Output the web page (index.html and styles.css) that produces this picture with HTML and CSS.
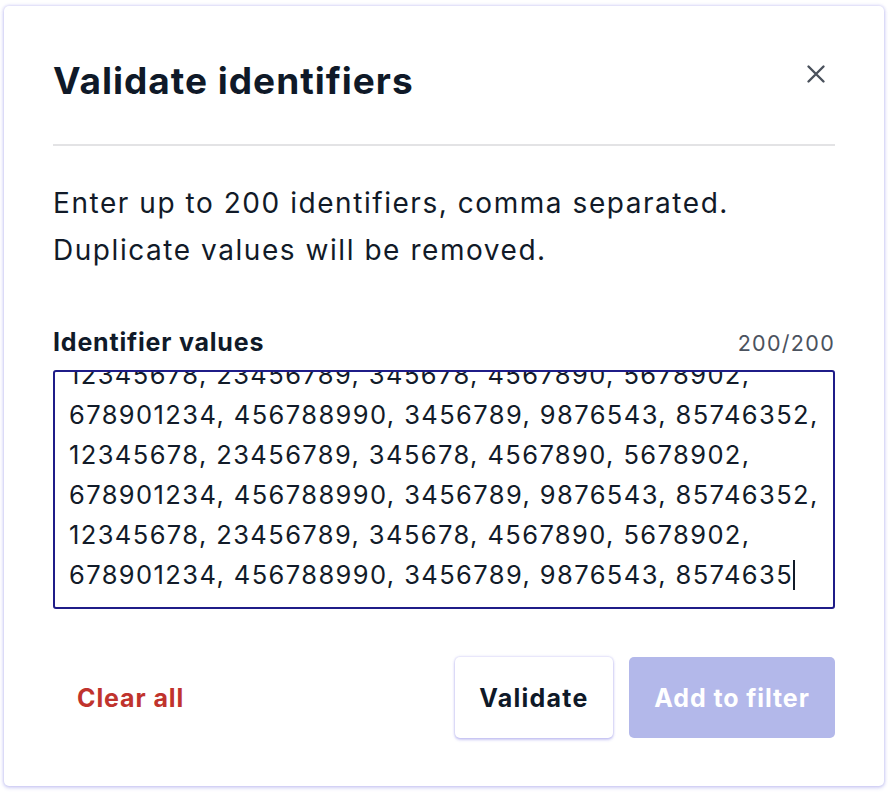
FILE: index.html
```html
<!DOCTYPE html>
<html lang="en">
<head>
<meta charset="utf-8">
<title>Validate identifiers</title>
<link rel="stylesheet" href="styles.css">
</head>
<body>
<div class="dialog">
  <header class="dialog-header">
    <h1 class="dialog-title">Validate identifiers</h1>
    <button class="close-btn" aria-label="Close">
      <svg width="20" height="20" viewBox="0 0 20 20" fill="none" stroke="#4a515c" stroke-width="2.4" stroke-linecap="round"><path d="M2.5 2.5 L17.5 17.5 M17.5 2.5 L2.5 17.5"/></svg>
    </button>
  </header>
  <p class="intro">Enter up to 200 identifiers, comma separated.<br>Duplicate values will be removed.</p>
  <div class="field-head">
    <span class="field-label">Identifier values</span>
    <span class="counter">200/200</span>
  </div>
  <div class="textarea">
    <div class="line">12345678, 23456789, 345678, 4567890, 5678902,</div>
    <div class="line">678901234, 456788990, 3456789, 9876543, 85746352,</div>
    <div class="line">12345678, 23456789, 345678, 4567890, 5678902,</div>
    <div class="line">678901234, 456788990, 3456789, 9876543, 85746352,</div>
    <div class="line">12345678, 23456789, 345678, 4567890, 5678902,</div>
    <div class="line">678901234, 456788990, 3456789, 9876543, 85746352,</div>
    <div class="line">12345678, 23456789, 345678, 4567890, 5678902,</div>
    <div class="line">678901234, 456788990, 3456789, 9876543, 8574635<span class="caret"></span></div>
  </div>
  <footer class="dialog-footer">
    <button class="btn-clear">Clear all</button>
    <div class="actions">
      <button class="btn btn-secondary">Validate</button>
      <button class="btn btn-primary" disabled>Add to filter</button>
    </div>
  </footer>
</div>
</body>
</html>
```

FILE: styles.css
```css
* { box-sizing: border-box; }
html, body { margin: 0; padding: 0; background: #ffffff; }
body {
  padding: 6px 4px;
  font-family: "Inter", "Noto Sans", "Liberation Sans", sans-serif;
  color: #101a29;
}
.dialog {
  width: 880px;
  height: 780px;
  background: #fff;
  border-radius: 5px;
  box-shadow: 0 0 3px 1px rgba(96, 90, 220, 0.22), 0 2px 4px rgba(96, 90, 220, 0.2);
  padding: 28px 49px 0 49px;
  display: flex;
  flex-direction: column;
}
.dialog-header {
  display: flex;
  justify-content: space-between;
  align-items: flex-start;
  padding: 21px 0 37px;
  border-bottom: 2px solid #e3e3e5;
}
.dialog-title {
  margin: 0;
  font-size: 37px;
  line-height: 52px;
  font-weight: 700;
  letter-spacing: 1px;
  color: #0f1928;
}
.close-btn {
  background: none;
  border: 0;
  padding: 0;
  margin: 4px 4px 0 0;
  width: 30px;
  height: 30px;
  display: flex;
  align-items: center;
  justify-content: center;
}
.intro {
  margin: 34px 0 0 0;
  font-size: 28px;
  line-height: 47px;
  letter-spacing: 1.55px;
  color: #111a28;
}
.field-head {
  display: flex;
  justify-content: space-between;
  align-items: baseline;
  margin-top: 51px;
}
.field-label {
  font-size: 25px;
  font-weight: 700;
  line-height: 34px;
  letter-spacing: 0.8px;
  color: #101a29;
}
.counter {
  font-size: 21.5px;
  letter-spacing: 1.3px;
  color: #4b525e;
}
.textarea {
  margin-top: 11px;
  height: 239px;
  border: 2px solid #1f1c88;
  border-radius: 3px;
  padding: 0 14px 12px 14px;
  display: flex;
  flex-direction: column;
  justify-content: flex-end;
  overflow: hidden;
}
.line {
  flex: none;
  font-size: 25.5px;
  line-height: 40px;
  letter-spacing: 1.4px;
  white-space: nowrap;
  color: #121b29;
}
.caret {
  display: inline-block;
  width: 2px;
  height: 30px;
  background: #121b29;
  vertical-align: -6px;
  margin-left: 0;
}
.dialog-footer {
  display: flex;
  justify-content: space-between;
  align-items: center;
  margin-top: 48px;
}
.btn-clear {
  background: none;
  border: 0;
  padding: 0 24px;
  font-family: inherit;
  font-size: 25px;
  font-weight: 700;
  letter-spacing: 0.9px;
  color: #c0332d;
  height: 81px;
}
.actions {
  display: flex;
  gap: 16px;
}
.btn {
  font-family: inherit;
  font-size: 25px;
  font-weight: 700;
  height: 81px;
  border-radius: 5px;
  border: 0;
  padding: 0;
}
.btn-secondary {
  background: #fff;
  color: #0f1928;
  width: 158px;
  letter-spacing: 1.25px;
  box-shadow: 0 0 2px 1px rgba(96, 90, 220, 0.18), 0 2px 3px rgba(96, 90, 220, 0.28);
}
.btn-primary {
  background: #b3b8ea;
  color: #ffffff;
  width: 206px;
  letter-spacing: 0.9px;
}
```
